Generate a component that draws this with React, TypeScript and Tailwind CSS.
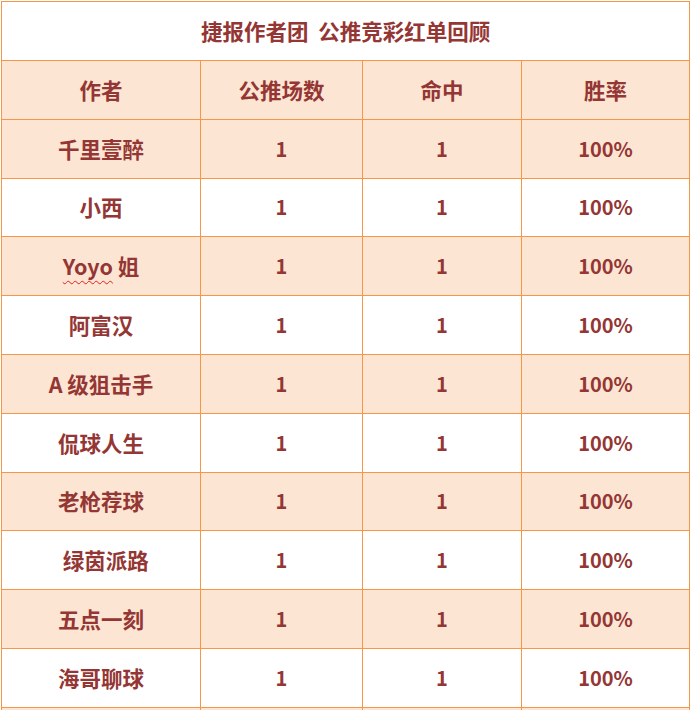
const rows = [
  '千里壹醉',
  '小西',
  'Yoyo 姐',
  '阿富汉',
  'A 级狙击手',
  '侃球人生',
  '老枪荐球',
  '\u00a0\u00a0绿茵派路',
  '五点一刻',
  '海哥聊球',
  '',
];

function Name({ name }: { name: string }) {
  if (name.startsWith('Yoyo')) {
    return (
      <>
        <span className="underline decoration-wavy decoration-[#e02020] decoration-1 underline-offset-[5px]">Yoyo</span> 姐
      </>
    );
  }
  return <>{name}</>;
}

export default function App() {
  const cell = 'border border-[#f79646] text-center align-middle';
  const num = `${cell} text-[20px]`;
  return (
    <div
      className="h-[710px] w-[692px] overflow-hidden bg-white pl-px pt-px"
      style={{ fontFamily: '"Noto Sans CJK SC", "Noto Sans", sans-serif' }}
    >
      <table className="w-[688px] table-fixed border-collapse text-[21.5px] font-bold text-[#943634]">
        <colgroup>
          <col className="w-[199px]" />
          <col className="w-[162px]" />
          <col className="w-[159px]" />
          <col className="w-[168px]" />
        </colgroup>
        <tbody>
          <tr className="h-[59px]">
            <td colSpan={4} className={`${cell} bg-white`}>
              捷报作者团&nbsp; 公推竞彩红单回顾
            </td>
          </tr>
          <tr className="h-[58.8px] bg-[#fde5d3]">
            <td className={cell}>作者</td>
            <td className={cell}>公推场数</td>
            <td className={cell}>命中</td>
            <td className={cell}>胜率</td>
          </tr>
          {rows.map((name, i) => (
            <tr key={i} className={`h-[58.8px] ${i % 2 === 0 ? 'bg-[#fde5d3]' : 'bg-white'}`}>
              <td className={cell}>
                <Name name={name} />
              </td>
              <td className={num}>{name ? '1' : ''}</td>
              <td className={num}>{name ? '1' : ''}</td>
              <td className={num}>{name ? '100%' : ''}</td>
            </tr>
          ))}
        </tbody>
      </table>
    </div>
  );
}
